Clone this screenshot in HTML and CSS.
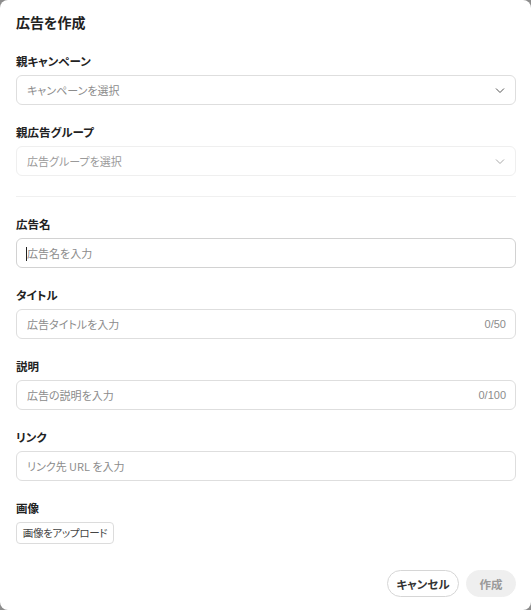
FILE: index.html
```html
<!DOCTYPE html>
<html lang="ja">
<head>
<meta charset="utf-8">
<link rel="stylesheet" href="styles.css">
</head>
<body>
<div class="modal">
  <h1 class="title">広告を作成</h1>

  <div class="field">
    <label class="label">親キャンペーン</label>
    <div class="select">
      <span class="ph">キャンペーンを選択</span>
      <svg class="chev" viewBox="0 0 12 12" width="12" height="12"><path d="M2 4.5 L6 8.5 L10 4.5" fill="none" stroke="#555" stroke-width="1"/></svg>
    </div>
  </div>

  <div class="field">
    <label class="label">親広告グループ</label>
    <div class="select disabled">
      <span class="ph">広告グループを選択</span>
      <svg class="chev" viewBox="0 0 12 12" width="12" height="12"><path d="M2 4.5 L6 8.5 L10 4.5" fill="none" stroke="#aaa" stroke-width="1"/></svg>
    </div>
  </div>

  <hr class="divider">

  <div class="field">
    <label class="label">広告名</label>
    <div class="input focused"><span class="caret"></span><span class="ph">広告名を入力</span></div>
  </div>

  <div class="field">
    <label class="label">タイトル</label>
    <div class="input"><span class="ph">広告タイトルを入力</span><span class="count">0/50</span></div>
  </div>

  <div class="field">
    <label class="label">説明</label>
    <div class="input"><span class="ph">広告の説明を入力</span><span class="count">0/100</span></div>
  </div>

  <div class="field">
    <label class="label">リンク</label>
    <div class="input"><span class="ph">リンク先 URL を入力</span></div>
  </div>

  <div class="field">
    <label class="label">画像</label>
    <div class="row"><button class="upload">画像をアップロード</button></div>
  </div>

  <div class="footer">
    <button class="btn cancel">キャンセル</button>
    <button class="btn create">作成</button>
  </div>
</div>
</body>
</html>
```

FILE: styles.css
```css
html, body {
  margin: 0;
  padding: 0;
  background: #8d8d8d;
}
body {
  font-family: "Noto Sans CJK JP", "Noto Sans", sans-serif;
  font-feature-settings: "palt";
  color: #222;
}
.modal {
  width: 531px;
  height: 610px;
  box-sizing: border-box;
  background: #fff;
  border-radius: 8px;
  padding: 12px 15px 0 16px;
  display: flex;
  flex-direction: column;
}
.title {
  margin: 0 0 21px 0;
  font-size: 14px;
  line-height: 20px;
  font-weight: 700;
  color: #222;
}
.field {
  display: flex;
  flex-direction: column;
  gap: 6px;
  margin-bottom: 19px;
}
.label {
  font-size: 11.5px;
  line-height: 16px;
  font-weight: 700;
  color: #222;
}
.select, .input {
  position: relative;
  height: 30px;
  box-sizing: border-box;
  border: 1px solid #dedede;
  border-radius: 6px;
  display: flex;
  align-items: center;
  padding: 0 9px 0 10px;
  font-size: 11px;
}
.select.disabled {
  border-color: #efefef;
}
.select .ph, .input .ph {
  flex: 1;
  color: #8c8c8c;
}
.select.disabled .ph {
  color: #9a9a9a;
}
.chev {
  display: block;
}
.divider {
  border: none;
  border-top: 1px solid #f0f0f0;
  margin: 1px 0 19px 0;
}
.input.focused {
  border-color: #d2d2d2;
}
.caret {
  position: absolute;
  left: 9px;
  top: 8px;
  width: 1px;
  height: 14px;
  background: #222;
}
.count {
  font-family: "Liberation Sans", Arial, sans-serif;
  font-size: 11px;
  color: #8c8c8c;
}
.row {
  display: flex;
}
.upload {
  font-family: "Noto Sans CJK JP", sans-serif;
  font-feature-settings: "palt";
  font-size: 10.5px;
  letter-spacing: -0.3px;
  color: #444;
  background: #fff;
  border: 1px solid #dcdcdc;
  border-radius: 4px;
  height: 22px;
  width: 98px;
  padding: 0;
  line-height: 20px;
  white-space: nowrap;
}
.footer {
  margin-top: 7px;
  display: flex;
  justify-content: flex-end;
  gap: 7px;
}
.btn {
  font-family: "Noto Sans CJK JP", sans-serif;
  font-feature-settings: "palt";
  font-size: 11.5px;
  font-weight: 700;
  height: 27px;
  border-radius: 14px;
  line-height: 20px;
  white-space: nowrap;
  padding: 0;
}
.cancel {
  background: #fff;
  border: 1px solid #d6d6d6;
  color: #333;
  width: 72px;
}
.create {
  background: #efefef;
  border: 1px solid #efefef;
  color: #9a9a9a;
  width: 50px;
}
```
